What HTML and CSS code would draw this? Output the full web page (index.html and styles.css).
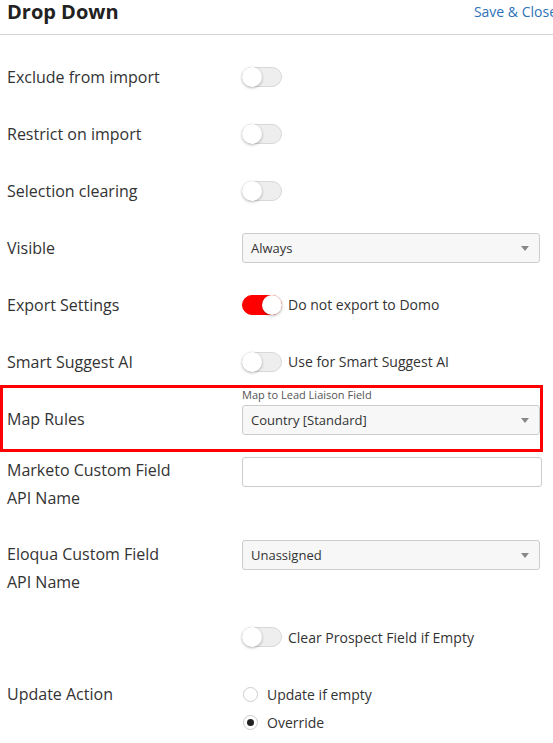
FILE: index.html
```html
<!DOCTYPE html>
<html>
<head>
<meta charset="utf-8">
<link rel="stylesheet" href="styles.css">
</head>
<body>
<div class="header">
  <div class="title">Drop Down</div>
  <a class="save">Save &amp; Close</a>
</div>
<div class="form">
  <div class="row">
    <div class="label">Exclude from import</div>
    <div class="control"><span class="toggle"></span></div>
  </div>
  <div class="row">
    <div class="label">Restrict on import</div>
    <div class="control"><span class="toggle"></span></div>
  </div>
  <div class="row">
    <div class="label">Selection clearing</div>
    <div class="control"><span class="toggle"></span></div>
  </div>
  <div class="row">
    <div class="label">Visible</div>
    <div class="control"><div class="select">Always<span class="caret"></span></div></div>
  </div>
  <div class="row">
    <div class="label">Export Settings</div>
    <div class="control"><span class="toggle on"></span><span class="toggle-text">Do not export to Domo</span></div>
  </div>
  <div class="row">
    <div class="label">Smart Suggest AI</div>
    <div class="control"><span class="toggle"></span><span class="toggle-text">Use for Smart Suggest AI</span></div>
  </div>
  <div class="row highlight">
    <div class="label">Map Rules</div>
    <div class="control stack">
      <div class="sublabel">Map to Lead Liaison Field</div>
      <div class="select">Country [Standard]<span class="caret"></span></div>
    </div>
  </div>
  <div class="row top marketo">
    <div class="label multi">Marketo Custom Field<br>API Name</div>
    <div class="control"><div class="input"></div></div>
  </div>
  <div class="row top eloqua">
    <div class="label multi">Eloqua Custom Field<br>API Name</div>
    <div class="control"><div class="select">Unassigned<span class="caret"></span></div></div>
  </div>
  <div class="row top clear">
    <div class="label"></div>
    <div class="control"><span class="toggle"></span><span class="toggle-text">Clear Prospect Field if Empty</span></div>
  </div>
  <div class="row top update">
    <div class="label multi">Update Action</div>
    <div class="control stack">
      <div class="radio-line"><span class="radio"></span>Update if empty</div>
      <div class="radio-line"><span class="radio checked"></span>Override</div>
    </div>
  </div>
</div>
</body>
</html>
```

FILE: styles.css
```css
* { box-sizing: border-box; }
html, body {
  margin: 0;
  padding: 0;
  background: #fff;
  font-family: "Open Sans", "Noto Sans", sans-serif;
  color: #333;
  overflow: hidden;
}
body { width: 553px; height: 743px; }

.header {
  height: 35px;
  border-bottom: 1px solid #d4d4d4;
  display: flex;
  justify-content: space-between;
  align-items: flex-start;
  padding: 0 0 0 7px;
  white-space: nowrap;
}
.title {
  font-size: 20px;
  font-weight: 700;
  line-height: 24px;
  color: #222;
}
.save {
  font-size: 14px;
  line-height: 24px;
  color: #2f72b8;
  margin-right: -4px;
}

.form { padding-top: 13px; }

.row {
  display: grid;
  grid-template-columns: 242px 300px;
  height: 57px;
  align-items: center;
}
.label {
  padding-left: 7px;
  font-size: 16px;
  line-height: 28px;
  color: #333;
}
.control {
  display: flex;
  align-items: center;
}
.control.stack {
  flex-direction: column;
  align-items: stretch;
}

.toggle {
  position: relative;
  display: inline-block;
  width: 40px;
  height: 20px;
  border-radius: 10px;
  background: #eee;
  border: 1px solid #d8d8d8;
  flex: none;
}
.toggle::after {
  content: "";
  position: absolute;
  left: -1px;
  top: -1px;
  width: 20px;
  height: 20px;
  border-radius: 50%;
  background: #fff;
  box-shadow: 0 1px 3px rgba(0,0,0,0.3);
}
.toggle.on {
  background: #ff0000;
  border-color: #ff0000;
}
.toggle.on::after {
  left: 19px;
}
.toggle-text {
  margin-left: 6px;
  font-size: 14px;
  color: #333;
  white-space: nowrap;
}

.select {
  position: relative;
  width: 298px;
  height: 30px;
  border: 1px solid #ccc;
  border-radius: 3px;
  background: #f7f7f7;
  font-size: 13px;
  line-height: 28px;
  padding-left: 8px;
  color: #333;
}
.caret {
  position: absolute;
  right: 10px;
  top: 12px;
  width: 0;
  height: 0;
  border-left: 4px solid transparent;
  border-right: 4px solid transparent;
  border-top: 5px solid #888;
}

.highlight {
  margin-top: -5px;
  height: 67px;
  width: 543px;
  border: 3px solid #ff0000;
  grid-template-columns: 239px 298px;
}
.highlight .label { padding-left: 4px; }
.highlight .control { padding-bottom: 14px; padding-top: 0; align-self: start; }
.sublabel {
  font-size: 11px;
  line-height: 14px;
  color: #555;
  margin-bottom: 3px;
}

.row.top { align-items: start; }
.marketo { margin-top: 4px; height: 84px; }
.input {
  margin-top: 1px;
  width: 300px;
  height: 30px;
  border: 1px solid #ccc;
  border-radius: 3px;
  background: #fff;
}
.eloqua { height: 83px; }
.clear { height: 57px; }
.clear .control { height: 28px; }
.update { height: 60px; }

.radio-line {
  display: flex;
  align-items: center;
  height: 28px;
  font-size: 14px;
  color: #333;
}
.radio {
  position: relative;
  width: 15px;
  height: 15px;
  border-radius: 50%;
  border: 1px solid #ccc;
  background: #fff;
  margin-left: 1px;
  margin-right: 9px;
  flex: none;
}
.radio.checked::after {
  content: "";
  position: absolute;
  left: 3px;
  top: 3px;
  width: 7px;
  height: 7px;
  border-radius: 50%;
  background: #222;
}
```
